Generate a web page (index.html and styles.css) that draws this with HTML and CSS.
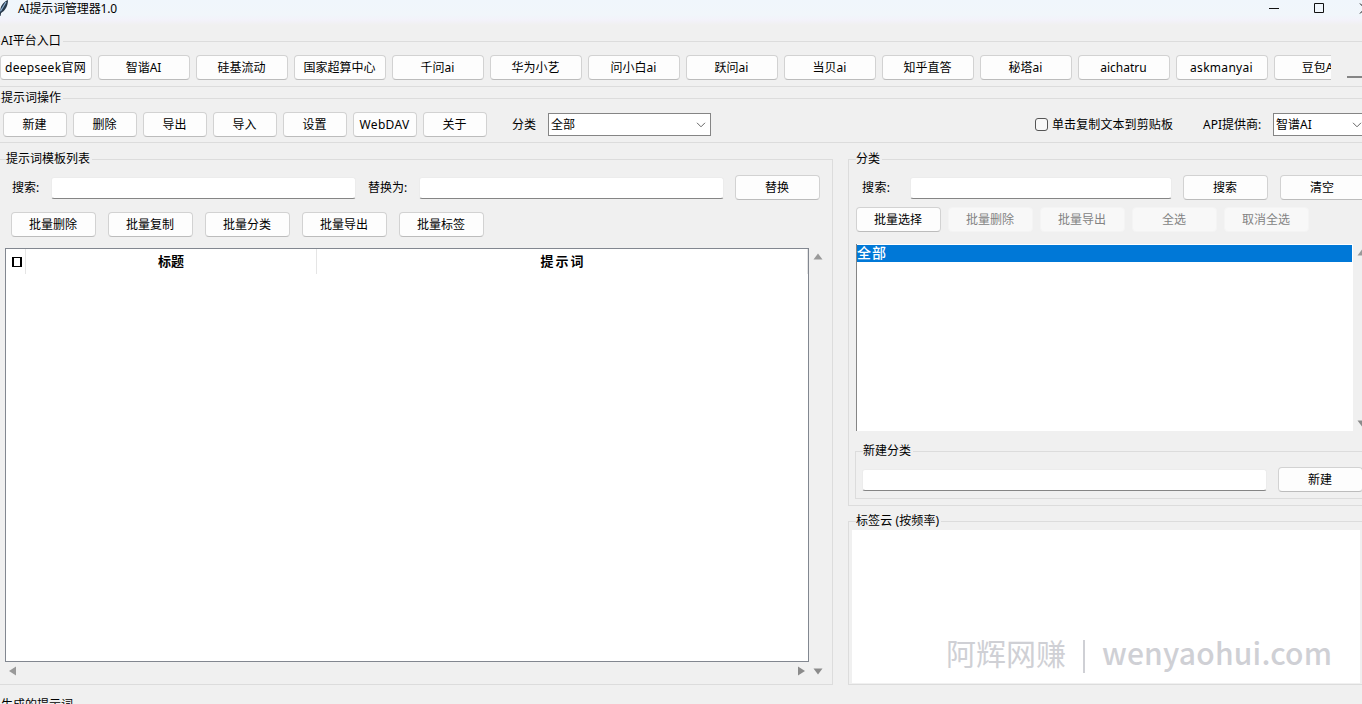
FILE: index.html
```html
<!DOCTYPE html>
<html lang="zh-CN">
<head>
<meta charset="utf-8">
<title>AI提示词管理器1.0</title>
<link rel="stylesheet" href="styles.css">
</head>
<body>
<div class="window">
  <header class="titlebar">
    <svg class="feather" width="12" height="18" viewBox="0 0 12 18"><path d="M8 0 C3 2 0 6 0 13 L1 13 C5 11 8 6 8 0Z" fill="#27394b"/><path d="M6 2 L0 12" stroke="#8fb2d4" stroke-width="1.2"/><path d="M1 11 L0 16" stroke="#27394b"/></svg>
    <span class="app-name">AI提示词管理器1.0</span>
    <svg class="win-controls" width="94" height="16" viewBox="0 0 94 16" fill="none" stroke="#111"><path d="M1 8.5H11M46.500 3.500H55.500V12.500H46.500ZM92 3.500L102 13.500M92 13.500L102 3.500"/></svg>
  </header>

  <fieldset class="group platforms">
    <legend>AI平台入口</legend>
    <div class="platform-area">
      <div class="platform-row">
        <button class="btn wide-text">deepseek官网</button><button class="btn">智谐AI</button><button class="btn">硅基流动</button><button class="btn">国家超算中心</button><button class="btn">千问ai</button><button class="btn">华为小艺</button><button class="btn">问小白ai</button><button class="btn">跃问ai</button><button class="btn">当贝ai</button><button class="btn">知乎直答</button><button class="btn">秘塔ai</button><button class="btn">aichatru</button><button class="btn wide-text">askmanyai</button><button class="btn">豆包AI</button>
      </div>
      <div class="scroll-thumb"></div>
    </div>
  </fieldset>

  <fieldset class="group actions">
    <legend>提示词操作</legend>
    <div class="action-row">
      <div class="action-buttons">
        <button class="btn">新建</button><button class="btn">删除</button><button class="btn">导出</button><button class="btn">导入</button><button class="btn">设置</button><button class="btn wide-text">WebDAV</button><button class="btn">关于</button>
      </div>
      <span class="label category-label">分类</span>
      <div class="select category-select"><span>全部</span><svg width="10" height="6" viewBox="0 0 10 6"><path d="M1 .8L5 4.800L9 .8" fill="none" stroke="#666"/></svg></div>
      <label class="copy-option"><span class="checkbox"></span>单击复制文本到剪贴板</label>
      <span class="label api-label">API提供商:</span>
      <div class="select api-select"><span>智谱AI</span><svg width="10" height="6" viewBox="0 0 10 6"><path d="M1 .8L5 4.800L9 .8" fill="none" stroke="#666"/></svg></div>
    </div>
  </fieldset>

  <main class="columns">
    <fieldset class="group templates">
      <legend>提示词模板列表</legend>
      <div class="search-row">
        <span class="label l-search">搜索:</span><div class="input"></div>
        <span class="label l-replace">替换为:</span><div class="input"></div>
        <button class="btn">替换</button>
      </div>
      <div class="batch-row">
        <button class="btn">批量删除</button><button class="btn">批量复制</button><button class="btn">批量分类</button><button class="btn">批量导出</button><button class="btn">批量标签</button>
      </div>
      <div class="table-area">
        <div class="table">
          <div class="table-head">
            <div class="th check"><span class="box"></span></div>
            <div class="th title">标题</div>
            <div class="th prompt">提示词</div>
          </div>
        </div>
        <div class="vbar">
          <svg width="10" height="7" viewBox="0 0 10 7"><path d="M5 .5L9.500 6.500H.5Z" fill="#999"/></svg>
        </div>
        <div class="hbar">
          <svg width="7" height="10" viewBox="0 0 7 10"><path d="M0 5L7 .5V9.500Z" fill="#999"/></svg>
          <svg width="7" height="10" viewBox="0 0 7 10"><path d="M7 5L0 .5V9.500Z" fill="#8b8b8b"/></svg>
        </div>
        <div class="corner">
          <svg width="10" height="7" viewBox="0 0 10 7"><path d="M5 6.500L9.500 .5H.5Z" fill="#8b8b8b"/></svg>
        </div>
      </div>
    </fieldset>

    <div class="side">
      <fieldset class="group categories">
        <legend>分类</legend>
        <div class="search-row">
          <span class="label l-search">搜索:</span><div class="input"></div>
          <button class="btn">搜索</button><button class="btn">清空</button>
        </div>
        <div class="batch-row">
          <button class="btn">批量选择</button><button class="btn" disabled>批量删除</button><button class="btn" disabled>批量导出</button><button class="btn" disabled>全选</button><button class="btn" disabled>取消全选</button>
        </div>
        <div class="list-area">
          <div class="list"><div class="item selected">全部</div></div>
          <div class="list-scroll">
            <svg width="10" height="7" viewBox="0 0 10 7"><path d="M5 .5L9.500 6.500H.5Z" fill="#999"/></svg>
            <svg width="10" height="7" viewBox="0 0 10 7"><path d="M5 6.500L9.500 .5H.5Z" fill="#8b8b8b"/></svg>
          </div>
        </div>
        <fieldset class="group new-category">
          <legend>新建分类</legend>
          <div class="new-row"><div class="input"></div><button class="btn">新建</button></div>
        </fieldset>
      </fieldset>

      <fieldset class="group tags">
        <legend>标签云 (按频率)</legend>
        <div class="tag-canvas"></div>
      </fieldset>
    </div>
  </main>

  <fieldset class="group output"><legend>生成的提示词</legend></fieldset>
  <div class="watermark"><span class="wm-name">阿辉网赚</span><span class="wm-bar"></span><span class="wm-site">wenyaohui.com</span></div>
</div>
</body>
</html>
```

FILE: styles.css
```css
* { box-sizing: border-box; }
body { margin: 0; overflow: hidden; background: #f0f0f0; }
.window {
  position: relative;
  width: 1362px;
  height: 704px;
  overflow: hidden;
  color: #000;
  font: 12px/18px "Noto Sans", "Noto Sans CJK SC", sans-serif;
  white-space: nowrap;
}
svg { display: block; flex: none; }

.titlebar {
  display: flex;
  height: 32px;
  background: linear-gradient(#f0f6fc 0, #f1f6fb 15px, #f3f2fa 20px, #f0f0f0 25px);
}
.app-name { margin-left: 6px; line-height: 17px; letter-spacing: -.15px; }
.win-controls { margin-left: auto; }

.group { margin: 0; padding: 0; border: 1px solid #dcdcdc; min-width: 0; }
.group > legend { height: 18px; padding: 0 2px 0 0; line-height: 17px; }

.btn {
  flex: none;
  height: 25px;
  padding: 1px 1px 0 0;
  border: 1px solid #d2d2d2;
  border-bottom-color: #bcbcbc;
  border-radius: 4px;
  background: #fdfdfd;
  color: #000;
  font: inherit;
  line-height: 22px;
  text-align: center;
}
.btn:disabled { border-color: #f4f4f4; background: #f8f8f8; color: #838383; }
.wide-text { letter-spacing: .3px; }
.input {
  flex: none;
  height: 22px;
  border: 1px solid #ececec;
  border-bottom-color: #858585;
  border-radius: 3px;
  background: #fff;
}
.label { flex: none; }

.platforms { height: 55px; margin-right: -2px; border-left: 0; }
.platforms > legend { margin-left: 1px; }
.platform-area { display: flex; padding-top: 5px; }
.platform-row { display: flex; flex: none; gap: 6px; width: 1331px; overflow: hidden; }
.platform-row .btn { width: 92px; }
.scroll-thumb { flex: none; width: 20px; height: 2px; margin: 21px 0 0 16px; background: #858585; }

.actions { height: 54px; margin: 2px -2px 0 0; border-left: 0; }
.actions > legend { margin-left: 1px; }
.action-row { display: flex; align-items: center; padding: 5px 0 0 3px; }
.action-buttons { display: flex; gap: 6px; }
.action-buttons .btn { width: 64px; }
.category-label { width: 36px; margin-left: 25px; }
.select {
  display: flex;
  flex: none;
  align-items: center;
  justify-content: space-between;
  height: 23px;
  padding: 0 4px 0 2px;
  border: 1px solid #858585;
  background: #fff;
  line-height: 20px;
}
.category-select { width: 163px; }
.copy-option { display: flex; flex: none; align-items: center; gap: 4px; width: 168px; margin-left: 324px; letter-spacing: .1px; }
.checkbox { width: 13px; height: 13px; border: 1px solid #555; border-radius: 3px; background: #f8f8f8; }
.api-label { width: 70px; }
.api-select { width: 94px; }

.columns { display: flex; gap: 15px; height: 535px; margin-top: 7px; }
.templates { flex: none; width: 833px; border-left: 0; }
.templates > legend { margin-left: 6px; }
.search-row { display: flex; align-items: center; padding-top: 7px; }
.search-row .btn { width: 85px; }
.templates .search-row { padding-left: 12px; }
.templates .l-search { width: 39px; }
.templates .input { width: 305px; }
.l-replace { width: 51px; margin-left: 12px; }
.templates .search-row .btn { margin-left: 11px; }
.batch-row { display: flex; }
.batch-row .btn { width: 85px; }
.templates .batch-row { gap: 12px; padding: 12px 0 0 11px; }
.table-area {
  display: grid;
  grid-template-columns: 804px 18px;
  grid-template-rows: 414px 19px;
  margin: 11px 0 0 5px;
}
.table { border: 1px solid #828790; background: #fff; }
.table-head { display: flex; height: 25px; font-weight: 700; text-align: center; line-height: 25px; }
.th { border-right: 1px solid #e5e5e5; }
.check { display: flex; align-items: center; justify-content: center; width: 20px; padding-left: 2px; }
.box { width: 10px; height: 10px; border: 1px solid #000; border-width: 1px 2px; }
.title { width: 291px; font-size: 13px; }
.prompt { flex: 1; padding-left: 2px; font-size: 13px; letter-spacing: 2px; }
.vbar { padding: 5px 0 0 4px; }
.hbar { display: flex; align-items: center; justify-content: space-between; padding: 0 4px 1px 4px; }
.corner { padding: 6px 0 0 4px; }

.side { flex: none; width: 520px; }
.categories { height: 356px; }
.categories > legend { margin-left: 7px; }
.categories > .search-row { padding-left: 13px; }
.categories .l-search { width: 48px; letter-spacing: .4px; }
.categories > .search-row .input { width: 262px; }
.categories > .search-row .btn { margin-left: 11px; }
.categories > .search-row .btn + .btn { margin-left: 12px; }
.categories .batch-row { gap: 7px; padding: 7px 0 0 7px; }
.list-area { display: flex; height: 187px; margin: 12px 0 0 7px; }
.list { width: 497px; padding: 1px 1px 0 0; border-left: 1px solid #858585; background: #fff; }
.item { height: 17px; font-size: 14px; line-height: 16px; letter-spacing: 1px; }
.selected { background: #0078d7; color: #fff; font-weight: 500; }
.list-scroll { display: flex; flex-direction: column; justify-content: space-between; padding: 5px 0 4px 4px; }
.new-category { height: 57px; margin: 11px 0 0 6px; }
.new-category > legend { margin-left: 7px; }
.new-row { display: flex; align-items: center; gap: 11px; padding: 7px 0 0 6px; }
.new-row .input { width: 405px; }
.new-row .btn { width: 85px; }

.tags { height: 173px; margin-top: 6px; }
.tags > legend { margin-left: 7px; letter-spacing: .1px; }
.tag-canvas { width: 508px; height: 153px; margin-left: 3px; background: #fff; }

.output { height: 60px; margin: 11px -2px 0 0; border-left: 0; border-top-color: transparent; }
.output > legend { margin-left: 1px; }

.watermark {
  position: absolute;
  left: 946px;
  top: 634px;
  display: flex;
  height: 42px;
  color: #cfd0d5;
  line-height: 37px;
}
.wm-name { width: 137px; font-size: 30px; font-weight: 400; font-family: "Noto Sans CJK SC", sans-serif; }
.wm-bar { width: 2px; height: 33px; margin: 6px 17px 0 0; background: #cfd0d5; }
.wm-site { font-size: 30px; font-weight: 500; letter-spacing: .2px; font-family: "Noto Sans CJK SC", sans-serif; }
```
